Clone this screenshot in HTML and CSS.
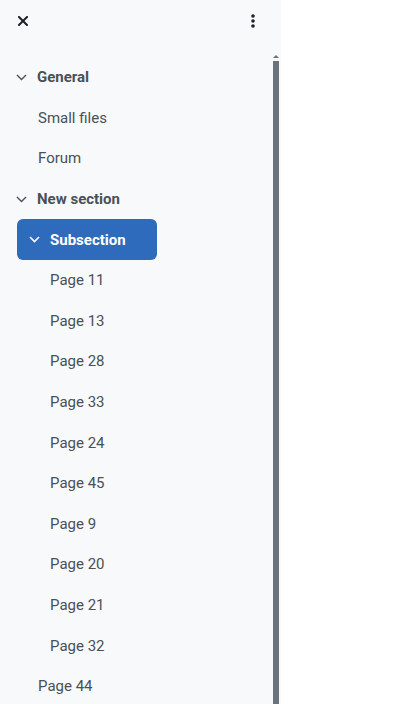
FILE: index.html
```html
<!DOCTYPE html>
<html lang="en">
<head>
<meta charset="UTF-8" />
<meta name="viewport" content="width=device-width, initial-scale=1" />
<title>Course index</title>
<link rel="stylesheet" href="styles.css">
</head>
<body>

<aside id="course-drawer">
  <div class="drawer-header">
    <button class="icon-btn" title="Close course index">
      <svg width="10" height="10" viewBox="0 0 10 10"><path d="M1 1L9 9M9 1L1 9" stroke="#1d2125" stroke-width="2" stroke-linecap="square"/></svg>
    </button>
    <button class="icon-btn" title="Course index options">
      <svg width="4" height="16" viewBox="0 0 4 16"><circle cx="2" cy="3" r="1.8" fill="#1d2125"/><circle cx="2" cy="8" r="1.8" fill="#1d2125"/><circle cx="2" cy="13" r="1.8" fill="#1d2125"/></svg>
    </button>
  </div>

  <div class="drawer-content">
    <ul class="courseindex">
      <li class="section">
        <a class="item section-title"><span class="chev"><svg width="11" height="7" viewBox="0 0 11 7"><path d="M1 1l4.5 4.5L10 1" fill="none" stroke="#495057" stroke-width="1.4"/></svg></span>General</a>
        <a class="item lvl1">Small files</a>
        <a class="item lvl1">Forum</a>
      </li>
      <li class="section">
        <a class="item section-title"><span class="chev"><svg width="11" height="7" viewBox="0 0 11 7"><path d="M1 1l4.5 4.5L10 1" fill="none" stroke="#495057" stroke-width="1.4"/></svg></span>New section</a>
        <a class="item subsection active"><span class="chev"><svg width="11" height="7" viewBox="0 0 11 7"><path d="M1 1l4.5 4.5L10 1" fill="none" stroke="#fff" stroke-width="1.6"/></svg></span>Subsection</a>
        <a class="item lvl2">Page 11</a>
        <a class="item lvl2">Page 13</a>
        <a class="item lvl2">Page 28</a>
        <a class="item lvl2">Page 33</a>
        <a class="item lvl2">Page 24</a>
        <a class="item lvl2">Page 45</a>
        <a class="item lvl2">Page 9</a>
        <a class="item lvl2">Page 20</a>
        <a class="item lvl2">Page 21</a>
        <a class="item lvl2">Page 32</a>
        <a class="item lvl1">Page 44</a>
      </li>
    </ul>
  </div>

  <!-- scrollbar drawn on top of the list -->
  <div class="scrollbar">
    <span class="scroll-up"></span>
    <span class="scroll-thumb"></span>
  </div>
</aside>

</body>
</html>
```

FILE: styles.css
```css
:root {
  --drawer-bg: #f8f9fa;
  --text: #495057;
  --primary: #2f6bbd;
  --thumb: #6a737b;
}
html, body {
  margin: 0;
  padding: 0;
  height: 100%;
  background: #fff;
  font-family: Roboto, 'Liberation Sans', sans-serif;
}
#course-drawer {
  position: relative;
  width: 281px;
  height: 100vh;
  background: var(--drawer-bg);
  display: flex;
  flex-direction: column;
  overflow: hidden;
}
.drawer-header {
  height: 52px;
  flex-shrink: 0;
  display: flex;
  justify-content: space-between;
  align-items: flex-start;
  padding: 8px 14px 0 9px;
  box-sizing: border-box;
}
.icon-btn {
  width: 28px;
  height: 26px;
  border: none;
  background: none;
  padding: 0;
  display: flex;
  align-items: center;
  justify-content: center;
  cursor: pointer;
}
.drawer-content {
  flex-grow: 1;
  overflow: hidden;
}
.courseindex {
  list-style: none;
  margin: 0;
  padding: 5px 0 40px 0;
}
.item {
  display: flex;
  align-items: center;
  height: 40.6px;
  font-size: 15px;
  color: var(--text);
  text-decoration: none;
  box-sizing: border-box;
  cursor: pointer;
}
.chev {
  width: 12px;
  display: inline-flex;
  margin-right: 9px;
}
.section-title {
  padding-left: 16px;
  font-weight: 700;
}
.lvl1 {
  padding-left: 38px;
}
.lvl2 {
  padding-left: 50px;
}
.subsection {
  margin-left: 17px;
  width: 140px;
  padding-left: 12px;
  font-weight: 700;
}
.subsection.active {
  background: var(--primary);
  color: #fff;
  border-radius: 6px;
}
.scrollbar {
  position: absolute;
  top: 55px;
  bottom: 0;
  left: 273px;
  width: 6px;
  display: flex;
  flex-direction: column;
  align-items: center;
}
.scroll-up {
  width: 0;
  height: 0;
  border-left: 3px solid transparent;
  border-right: 3px solid transparent;
  border-bottom: 3px solid var(--thumb);
  margin-bottom: 3px;
}
.scroll-thumb {
  flex-grow: 1;
  width: 6px;
  background: var(--thumb);
}
```
